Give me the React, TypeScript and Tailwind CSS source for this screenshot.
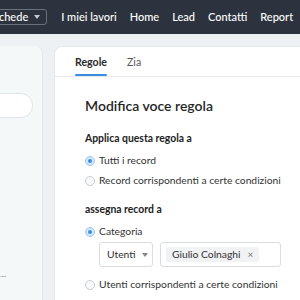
import React from "react";

function Radio({ checked, label }: { checked?: boolean; label: string }) {
    return (
        <label className="flex items-center h-[20px] gap-[4px]">
            <span
                className={
                    checked
                        ? "w-[10px] h-[10px] rounded-full border border-[#9cc7f0] bg-[#d6e8fa] flex items-center justify-center"
                        : "w-[10px] h-[10px] rounded-full border border-[#c9cdd1] bg-[#fafafa]"
                }
            >
                {checked && <span className="w-[4px] h-[4px] rounded-full bg-[#3b8de0]" />}
            </span>
            <span className="text-[10.3px] text-[#333]">{label}</span>
        </label>
    );
}

export default function App() {
    const nav = ["I miei lavori", "Home", "Lead", "Contatti", "Report"];

    return (
        <div className="w-[300px] h-[300px] overflow-hidden flex flex-col bg-[#edf1f4] font-['Lato',sans-serif]">
            {/* Top bar */}
            <div className="h-[34px] shrink-0 bg-[#2c333e] flex items-center text-white text-[11px] font-medium whitespace-nowrap">
                <div className="ml-[-8px] h-[16px] pr-[6px] border border-[#6a717c] rounded-[3px] flex items-center gap-[6px]">
                    <span>Schede</span>
                    <svg width="6" height="4" viewBox="0 0 6 4" className="fill-[#c9ccd1]">
                        <path d="M0 0h6L3 4z" />
                    </svg>
                </div>
                <div className="ml-[14px] flex gap-[13px]">
                    {nav.map((n) => (
                        <span key={n}>{n}</span>
                    ))}
                </div>
            </div>

            <div className="flex flex-1 pt-[12px]">
                {/* Left sidebar */}
                <div className="w-[43px] shrink-0 bg-[#f4f8f8] border-r border-[#e1e7ea] rounded-tr-[8px] flex flex-col">
                    <div className="mt-[47px] ml-[-20px] w-[53px] h-[25px] bg-white border border-[#dfe4e7] rounded-[12px]" />
                    <div className="mt-[152px] text-[8px] leading-[8px] text-[#8a9096] tracking-tighter">....</div>
                </div>

                {/* Main panel */}
                <div className="flex-1 ml-[11px] bg-white rounded-tl-[8px] border-l border-t border-[#e4e9ec] flex flex-col whitespace-nowrap">
                    <div className="flex gap-[20px] pl-[20px] border-b border-[#e6e9ec] h-[30px]">
                        <div className="flex flex-col">
                            <span className="pt-[7px] leading-[16px] text-[10.6px] font-bold text-[#2a2a2a]">Regole</span>
                            <span className="mt-[4px] h-[3px] rounded-full bg-[#3b8de0]" />
                        </div>
                        <span className="pt-[7px] leading-[16px] text-[10.6px] text-[#555]">Zia</span>
                    </div>

                    <div className="pl-[30px] flex flex-col">
                        <h2 className="mt-[19px] text-[14px] leading-[20px] font-semibold text-[#262626]">Modifica voce regola</h2>

                        <div className="mt-[14px] text-[10.4px] leading-[16px] font-bold text-[#222]">Applica questa regola a</div>
                        <div className="mt-[5px] flex flex-col">
                            <Radio checked label="Tutti i record" />
                            <Radio label="Record corrispondenti a certe condizioni" />
                        </div>

                        <div className="mt-[10px] text-[10.4px] leading-[16px] font-bold text-[#222]">assegna record a</div>
                        <div className="mt-[5px] flex flex-col">
                            <Radio checked label="Categoria" />
                            <div className="ml-[14px] flex gap-[7px]">
                                <div className="w-[54px] h-[25px] border border-[#d9dde0] rounded-[3px] flex items-center pl-[7px] gap-[6px] text-[10.3px] text-[#333]">
                                    <span>Utenti</span>
                                    <svg width="6" height="4" viewBox="0 0 6 4" className="fill-[#888]">
                                        <path d="M0 0h6L3 4z" />
                                    </svg>
                                </div>
                                <div className="w-[121px] h-[25px] border border-[#d9dde0] rounded-[3px] flex items-center pl-[5px]">
                                    <span className="h-[15px] px-[6px] rounded-[2px] bg-[#f1f2f3] flex items-center gap-[7px] text-[10.3px] text-[#333]">
                                        Giulio Colnaghi
                                        <span className="text-[10px] text-[#777]">×</span>
                                    </span>
                                </div>
                            </div>
                            <div className="mt-[8px]">
                                <Radio label="Utenti corrispondenti a certe condizioni" />
                            </div>
                        </div>
                    </div>
                </div>
            </div>
        </div>
    );
}
